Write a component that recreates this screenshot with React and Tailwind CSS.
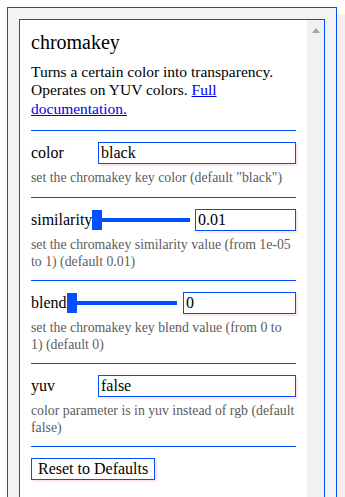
import React from 'react';

const Field = ({ value }) => (
  <div className="flex-1 h-[22px] border border-[#0050ff] bg-white px-[2px] flex items-center text-[16px] leading-[18px] text-black shadow-[2px_2px_0_#ffe6e6]">
    {value}
  </div>
);

const Slider = ({ width }) => (
  <div className={`flex items-center h-[20px] ${width}`}>
    <div className="w-[10px] h-[20px] bg-[#0050ff]" />
    <div className="flex-1 h-[4px] bg-[#0050ff]" />
  </div>
);

const Help = ({ children }) => (
  <p className="mt-[5px] text-[13.8px] leading-[17px] text-[#5c5c5c]">{children}</p>
);

const App = () => {
  return (
    <div className="h-[497px] overflow-hidden bg-white pt-[7px] pl-[7px] [font-family:'Liberation_Serif','Times_New_Roman',serif]">
      <div className="w-[330px] h-[520px] border border-[#0050ff] bg-[#f3f3f3] p-[11px] shadow-[8px_7px_0_#ffecec]">
        <div className="flex h-full border border-[#0050ff] bg-white">
          {/* Panel content */}
          <div className="flex-1 p-[11px] text-black">
            <h2 className="text-[20px] leading-[23px]">chromakey</h2>
            <p className="mt-[9px] text-[15.5px] leading-[18.4px]">
              Turns a certain color into transparency. Operates on YUV colors.{' '}
              <a href="#" className="text-[#0000ee] underline">Full documentation.</a>
            </p>

            <div className="mt-[12px] border-t border-[#0050ff] pt-[11px] pb-[11px]">
              <div className="flex items-center h-[22px]">
                <span className="w-[67px] text-[16px] leading-[18px]">color</span>
                <Field value="black" />
              </div>
              <Help>set the chromakey key color (default "black")</Help>
            </div>

            <div className="border-t border-[#0050ff] pt-[11px] pb-[10px]">
              <div className="flex items-center h-[22px]">
                <span className="w-[61px] text-[16px] leading-[18px]">similarity</span>
                <Slider width="w-[98px]" />
                <div className="ml-[5px] flex flex-1">
                  <Field value="0.01" />
                </div>
              </div>
              <Help>set the chromakey similarity value (from 1e-05 to 1) (default 0.01)</Help>
            </div>

            <div className="border-t border-[#0050ff] pt-[11px] pb-[10px]">
              <div className="flex items-center h-[22px]">
                <span className="w-[36px] text-[16px] leading-[18px]">blend</span>
                <Slider width="w-[110px]" />
                <div className="ml-[6px] flex flex-1">
                  <Field value="0" />
                </div>
              </div>
              <Help>set the chromakey key blend value (from 0 to 1) (default 0)</Help>
            </div>

            <div className="border-t border-[#0050ff] pt-[11px] pb-[10px]">
              <div className="flex items-center h-[22px]">
                <span className="w-[67px] text-[16px] leading-[18px]">yuv</span>
                <Field value="false" />
              </div>
              <Help>color parameter is in yuv instead of rgb (default false)</Help>
            </div>

            <div className="border-t border-[#0050ff] pt-[10px]">
              <button className="h-[22px] border border-[#0050ff] bg-white px-[6px] text-[16px] leading-[18px] text-black shadow-[2px_2px_0_#ffe6e6]">
                Reset to Defaults
              </button>
            </div>
          </div>

          {/* Scrollbar */}
          <div className="w-[17px] bg-[#f1f1f1] flex justify-center pt-[8px]">
            <svg width="8" height="5" viewBox="0 0 8 5">
              <path d="M0 5 L4 0 L8 5 Z" fill="#a3a3a3" />
            </svg>
          </div>
        </div>
      </div>
    </div>
  );
};

export default App;
